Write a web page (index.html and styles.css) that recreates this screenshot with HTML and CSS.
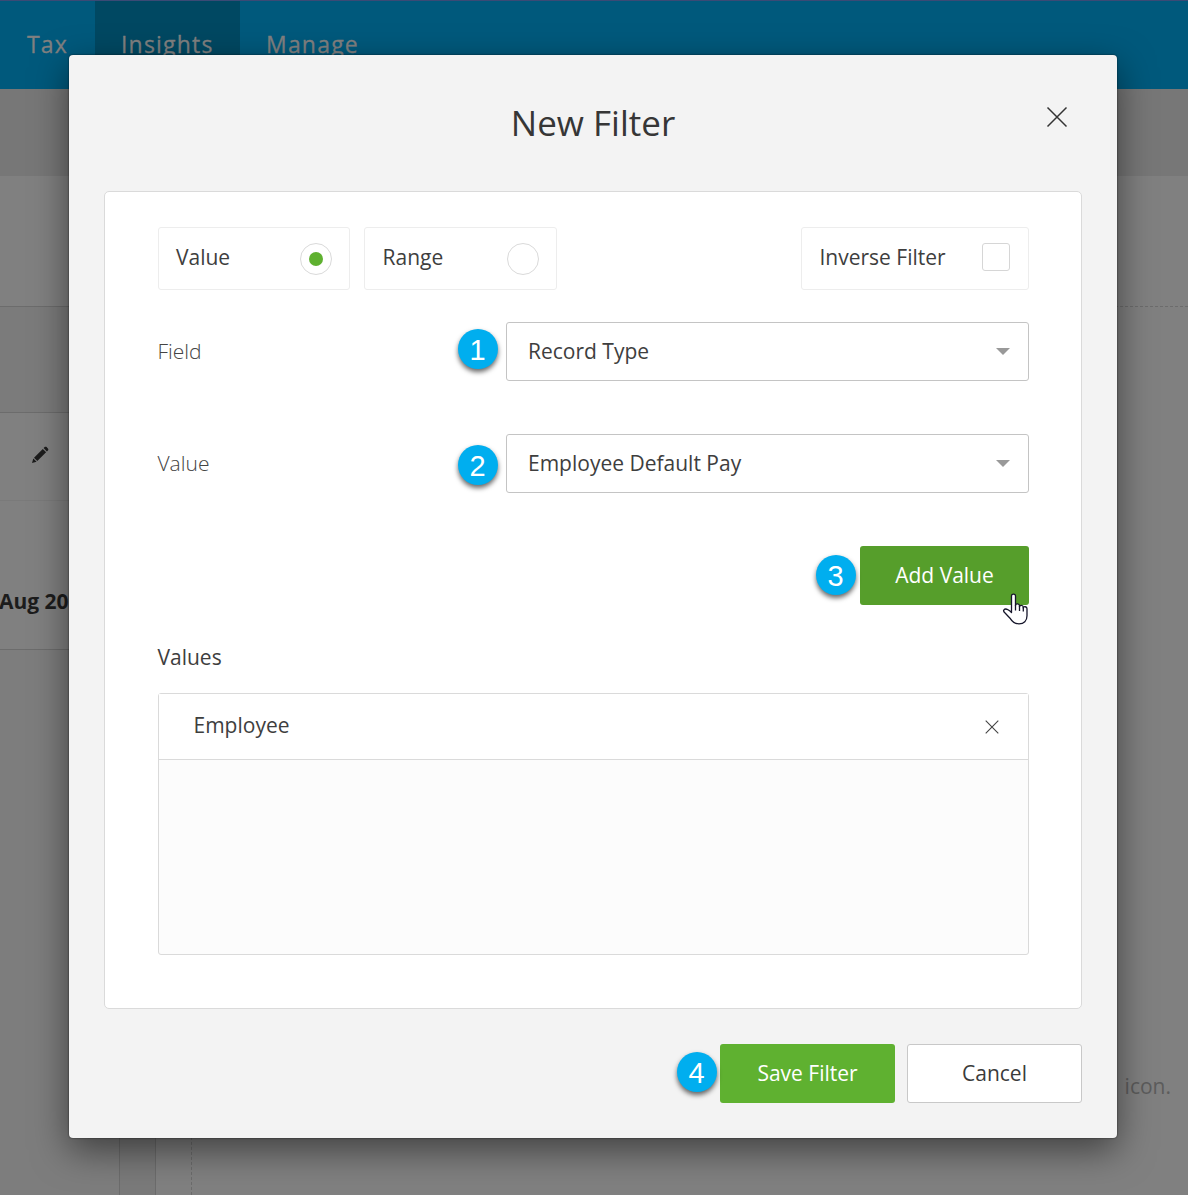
FILE: index.html
```html
<!DOCTYPE html>
<html lang="en">
<head>
<meta charset="utf-8">
<title>New Filter</title>
<link rel="stylesheet" href="styles.css">
</head>
<body>
<div class="page">
  <nav class="nav">
    <a class="nav-item nav-tax">Tax</a>
    <a class="nav-item nav-insights">Insights</a>
    <a class="nav-item nav-manage">Manage</a>
  </nav>
  <div class="subbar"></div>
  <div class="workspace">
    <div class="side">
      <div class="side-top"></div>
      <div class="side-head"></div>
      <div class="side-edit">
        <svg width="18" height="18" viewBox="0 0 18 18"><path d="M1 17l1.3-4.6 3.3 3.3zM3 11.700L11.800 2.900l3.300 3.300L6.300 15zM12.600 2.100l1-1c.6-.6 1.400-.6 2 0l1.300 1.300c.6.6.6 1.400 0 2l-1 1z" fill="#1c1c1c"/></svg>
      </div>
      <div class="side-date">Aug 20</div>
      <div class="side-rest"><div class="side-gutter"></div></div>
    </div>
    <div class="canvas">
      <div class="canvas-top"></div>
      <div class="canvas-body"><span class="hint">icon.</span></div>
    </div>
  </div>
</div>

<div class="modal">
  <header class="modal-head">
    <h1 class="title">New Filter</h1>
    <svg class="close" width="22" height="22" viewBox="0 0 22 22"><path d="M1.500 1.500l19 19M20.500 1.500l-19 19" stroke="#333" stroke-width="1.500" fill="none"/></svg>
  </header>
  <section class="panel">
    <div class="options">
      <label class="option option-value"><span>Value</span><i class="radio radio-on"></i></label>
      <label class="option option-range"><span>Range</span><i class="radio"></i></label>
      <label class="option option-inverse"><span>Inverse Filter</span><i class="check"></i></label>
    </div>
    <div class="field field-first">
      <span class="label">Field</span>
      <div class="select"><b class="badge badge-one">1</b><span>Record Type</span><i class="caret"></i></div>
    </div>
    <div class="field">
      <span class="label">Value</span>
      <div class="select"><b class="badge badge-two">2</b><span>Employee Default Pay</span><i class="caret"></i></div>
    </div>
    <div class="add-row">
      <div class="btn btn-add"><b class="badge badge-three">3</b><span>Add Value</span>
        <svg class="cursor" width="27" height="34" viewBox="0 0 27 34"><path d="M9.500 20.500V4c0-2.600 4-2.600 4 0v9.500c0-2.200 3.800-2.200 4 .3v1c.2-2 3.600-2 3.800.4v.8c.3-1.900 3.700-1.700 3.700.8v7c0 5-3.200 8-8 8-4.300 0-6.500-1.800-8.500-5L3.300 21.300c-1.500-1.200-2.300-2-1.500-3.200.9-1.200 2.700-1.200 4.200-.3 1.400.8 2.500 1.600 3.500 2.700z" fill="#fff" stroke="#15152a" stroke-width="1.300" stroke-linejoin="round"/><path d="M13.500 13v5.500M17.500 14v5M21.300 15v4.500" stroke="#15152a" stroke-width="1.300" fill="none"/></svg>
      </div>
    </div>
    <div class="values-label">Values</div>
    <div class="list">
      <div class="list-row"><span>Employee</span>
        <svg width="14" height="14" viewBox="0 0 14 14"><path d="M.7.7l12.600 12.600M13.300.7L.7 13.300" stroke="#444" stroke-width="1.100" fill="none"/></svg>
      </div>
    </div>
  </section>
  <footer class="actions">
    <div class="btn btn-save"><b class="badge badge-four">4</b><span>Save Filter</span></div>
    <div class="btn btn-cancel"><span>Cancel</span></div>
  </footer>
</div>
</body>
</html>
```
FILE: styles.css
```css
* { box-sizing: border-box; }
body {
  margin: 0;
  width: 1188px;
  height: 1195px;
  position: relative;
  overflow: hidden;
  font-family: "Open Sans", "Noto Sans", sans-serif;
  font-size: 21px;
  line-height: 30px;
  color: #3e3e3e;
}
.page { height: 1195px; display: flex; flex-direction: column; background: #808080; }
.nav { height: 89px; flex: none; display: flex; background: #00597c; border-top: 1px solid #3b4a75; }
.nav-item {
  padding-top: 28px;
  font-size: 23px;
  font-weight: 600;
  letter-spacing: .7px;
  color: #808080;
}
.nav-tax { width: 95px; padding-left: 27px; }
.nav-insights { width: 145px; padding-left: 26px; background: #004862; }
.nav-manage { padding-left: 26px; }
.nav-item { font-weight: 400; letter-spacing: 1.2px; -webkit-text-stroke: .3px #808080; }
.subbar { height: 87px; flex: none; background: #777; }
.workspace { flex: 1; display: flex; }
.side { width: 156px; display: flex; flex-direction: column; }
.side-top { height: 131px; border-bottom: 1px solid #6c6c6c; }
.side-head { height: 106px; background: #7b7b7b; border-bottom: 1px solid #6c6c6c; }
.side-edit { height: 88px; padding: 33px 0 0 31px; border-bottom: 1px solid #7a7a7a; }
.side-edit svg { display: block; }
.side-date { height: 149px; padding-top: 85px; border-bottom: 1px solid #6c6c6c; font-weight: 700; color: #1c1c1c; white-space: nowrap; text-indent: -1px; }
.side-rest { flex: 1; display: flex; justify-content: flex-end; background: #7d7d7d; }
.side-gutter { width: 37px; background: #7a7a7a; border: solid #6c6c6c; border-width: 0 1px; }
.canvas { flex: 1; display: flex; flex-direction: column; padding-left: 35px; }
.canvas-top { height: 130px; }
.canvas-body { flex: 1; border: dashed #6c6c6c; border-width: 1px 0 0 1px; display: flex; justify-content: flex-end; padding: 764px 17px 0 0; }
.hint { color: #5c5c5c; }

.modal {
  position: absolute;
  left: 69px;
  top: 55px;
  width: 1048px;
  height: 1083px;
  padding: 0 35px;
  background: #f3f3f3;
  border-radius: 4px;
  box-shadow: 0 0 2px rgba(0, 0, 0, .7), 0 12px 36px rgba(0, 0, 0, .5);
}
.modal-head { height: 136px; display: grid; grid-template-columns: 1fr auto 1fr; }
.title { grid-column: 2; margin: 44px 0 0; font-size: 35px; line-height: 48px; font-weight: 400; color: #363636; }
.close { justify-self: end; margin: 51px 14px 0 0; }
.panel { height: 818px; padding: 35px 52px 0 53px; background: #fff; border: 1px solid #dadada; border-radius: 5px; }
.options { display: flex; gap: 14px; }
.option { height: 63px; display: flex; align-items: center; justify-content: space-between; padding: 0 17px; border: 1px solid #ededed; border-radius: 3px; }
.option span { margin-top: -3px; }
.option-value { width: 192px; }
.option-range { width: 193px; padding: 0 17.5px; }
.option-inverse { width: 228px; margin-left: auto; padding: 0 18px 0 17.5px; }
.radio { width: 32px; height: 32px; border: 1px solid #dadada; border-radius: 50%; display: flex; align-items: center; justify-content: center; }
.radio-on::after { content: ""; width: 14px; height: 14px; border-radius: 50%; background: #5fb130; }
.check { width: 28px; height: 28px; margin-top: -3px; border: 1px solid #d6d6d6; border-radius: 3px; }
.field { margin-top: 53px; display: flex; align-items: center; justify-content: space-between; }
.field-first { margin-top: 32px; }
.label { margin: -2px 0 0 -.5px; font-weight: 300; color: #444; }
.select { position: relative; width: 523px; height: 59px; display: flex; align-items: center; justify-content: space-between; padding: 0 18px 0 21px; border: 1px solid #c4c4c4; border-radius: 3px; }
.select span, .btn span { margin-top: -2px; }
.caret { border: solid transparent; border-width: 7px 7px 0; border-top-color: #999; }
.add-row { margin-top: 53px; display: flex; justify-content: flex-end; }
.btn { position: relative; height: 59px; display: flex; align-items: center; justify-content: center; border-radius: 3px; color: #fff; }
.btn-add { width: 169px; background: #569e2b; }
.cursor { position: absolute; left: 142px; top: 46px; }
.values-label { margin: 37px 0 0 -.5px; }
.list { height: 262px; margin-top: 21px; background: #fcfcfc; border: 1px solid #dadada; border-radius: 3px; }
.list-row { height: 66px; display: flex; align-items: center; justify-content: space-between; padding: 0 29.500px 0 34.500px; background: #fff; border-bottom: 1px solid #dadada; }
.list-row span { margin-top: -3px; }
.list-row svg { margin-top: 1px; }
.actions { margin-top: 35px; display: flex; justify-content: flex-end; gap: 12px; }
.btn-save { width: 175px; background: #5fb130; }
.btn-cancel { width: 175px; background: #fff; border: 1px solid #c8c8c8; color: #3b3b3b; }
.badge {
  position: absolute;
  width: 40px;
  height: 40px;
  border-radius: 50%;
  background: #00aeef;
  color: #fff;
  font: 400 29px/42px "Liberation Sans", Arial, sans-serif;
  text-align: center;
  text-indent: -1px;
  box-shadow: 0 3px 5px rgba(0, 0, 0, .6);
}
.badge-one { left: -49px; top: 6px; }
.badge-two { left: -49px; top: 10px; }
.badge-three { left: -44px; top: 9px; }
.badge-four { left: -43px; top: 8px; }
```
